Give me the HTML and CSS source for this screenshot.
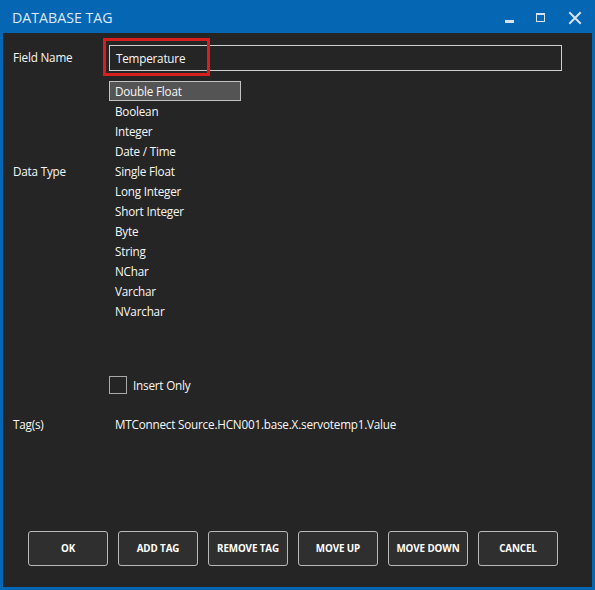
FILE: index.html
```html
<!DOCTYPE html>
<html>
<head>
<meta charset="utf-8">
<link rel="stylesheet" href="styles.css">
</head>
<body>
<div class="window">
  <div class="titlebar">
    <div class="title">DATABASE TAG</div>
    <div class="controls">
      <svg class="ctl" width="30" height="33" viewBox="0 0 30 33"><rect x="10" y="20" width="9" height="3" fill="#d4e3f1"/></svg>
      <svg class="ctl" width="33" height="33" viewBox="0 0 33 33"><rect x="11.5" y="13.5" width="8" height="8" fill="none" stroke="#d4e3f1" stroke-width="1"/><rect x="11" y="13" width="9" height="2" fill="#d4e3f1"/></svg>
      <svg class="ctl" width="35" height="33" viewBox="0 0 35 33"><path d="M12 13 L22 23 M22 13 L12 23" stroke="#d4e3f1" stroke-width="2" stroke-linecap="square"/></svg>
    </div>
  </div>
  <div class="content">
    <div class="row field-row">
      <div class="label">Field Name</div>
      <div class="input-wrap">
        <div class="input">Temperature</div>
        <div class="highlight"></div>
      </div>
    </div>
    <div class="row type-row">
      <div class="label type-label">Data Type</div>
      <ul class="list">
        <li class="selected">Double Float</li>
        <li>Boolean</li>
        <li>Integer</li>
        <li>Date / Time</li>
        <li>Single Float</li>
        <li>Long Integer</li>
        <li>Short Integer</li>
        <li>Byte</li>
        <li>String</li>
        <li>NChar</li>
        <li>Varchar</li>
        <li>NVarchar</li>
      </ul>
    </div>
    <div class="row check-row">
      <div class="label"></div>
      <label class="check"><span class="box"></span><span>Insert Only</span></label>
    </div>
    <div class="row tag-row">
      <div class="label">Tag(s)</div>
      <div class="tagval">MTConnect Source.HCN001.base.X.servotemp1.Value</div>
    </div>
    <div class="buttons">
      <button>OK</button>
      <button>ADD TAG</button>
      <button>REMOVE TAG</button>
      <button>MOVE UP</button>
      <button>MOVE DOWN</button>
      <button>CANCEL</button>
    </div>
  </div>
</div>
</body>
</html>
```
FILE: styles.css
```css
* { box-sizing: border-box; }
html, body { margin: 0; padding: 0; }
body {
  width: 595px;
  height: 590px;
  overflow: hidden;
  font-family: "Segoe UI", "Open Sans", "Noto Sans", sans-serif;
}
.window {
  width: 595px;
  height: 590px;
  background: #0566b3;
  display: flex;
  flex-direction: column;
}
.titlebar {
  height: 33px;
  display: flex;
  align-items: flex-start;
  justify-content: space-between;
}
.title {
  color: #dde9f5;
  font-size: 14.2px;
  padding: 8px 0 0 12px;
  line-height: 20px;
}
.controls {
  display: flex;
  padding-right: 2px;
}
.ctl { display: block; }
.content {
  flex: 1;
  margin: 0 3px 3px 3px;
  background: #252525;
  color: #f7f7f7;
  font-size: 11.7px;
  letter-spacing: -0.2px;
  position: relative;
  display: flex;
  flex-direction: column;
  padding-top: 12px;
}
.row {
  display: flex;
}
.label {
  width: 106px;
  padding-left: 10px;
  flex-shrink: 0;
}
.field-row .label { line-height: 26px; margin-top: -1px; }
.input-wrap {
  position: relative;
  width: 453px;
}
.input {
  height: 26px;
  border: 1px solid #cfcfcf;
  padding-left: 6px;
  line-height: 25px;
}
.highlight {
  position: absolute;
  left: -6px;
  top: -7px;
  width: 107px;
  height: 38px;
  border: 3px solid #d81f1f;
}
.type-row { margin-top: 10px; }
.type-label { padding-top: 82px; }
.list {
  list-style: none;
  margin: 0;
  padding: 0;
}
.list li {
  height: 20px;
  line-height: 18px;
  padding-left: 5px;
  width: 132px;
  border: 1px solid transparent;
}
.list li.selected {
  background: #545454;
  border-color: #c2c2c2;
}
.check-row { margin-top: 55px; }
.check {
  display: flex;
  align-items: center;
  gap: 6px;
  height: 18px;
}
.box {
  width: 18px;
  height: 18px;
  border: 1px solid #a9a9a9;
  display: block;
}
.tag-row { margin-top: 21px; }
.tag-row .label, .tagval { line-height: 18px; }
.tagval { padding-left: 6px; }
.buttons {
  margin-top: auto;
  margin-bottom: 21px;
  display: flex;
  gap: 10px;
  padding-left: 25px;
}
.buttons button {
  width: 80px;
  height: 35px;
  background: #2f2f2f;
  border: 1px solid #b9b9b9;
  border-radius: 3px;
  color: #ffffff;
  font-family: "Segoe UI", "Open Sans", "Noto Sans", sans-serif;
  font-weight: bold;
  font-size: 9.8px;
  letter-spacing: -0.1px;
  padding: 0;
}
```
